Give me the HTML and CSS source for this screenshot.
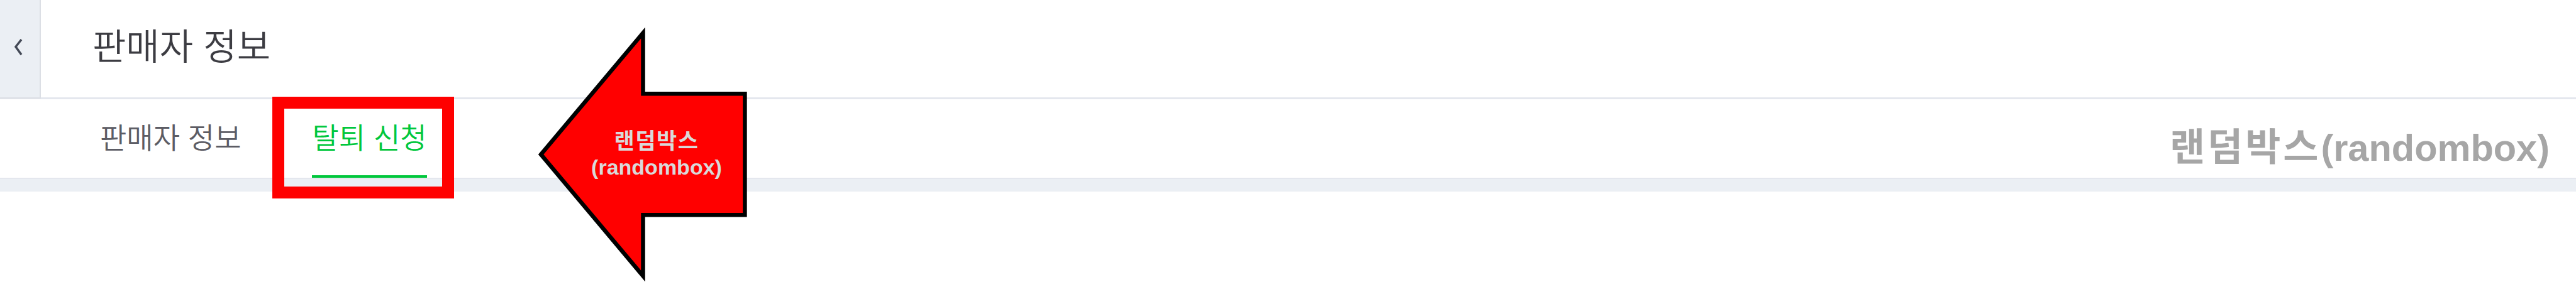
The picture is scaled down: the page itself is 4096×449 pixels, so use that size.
FILE: index.html
```
<!DOCTYPE html>
<html lang="ko">
<head>
    <meta charset="UTF-8">
    <meta name="viewport" content="width=device-width, initial-scale=1.0">
    <title>판매자 정보</title>
    <link rel="stylesheet" href="styles.css">
</head>
<body>
    <div class="page">
        <!-- Header -->
        <header class="header">
            <button class="collapse" type="button">
                <svg class="chevron" viewBox="0 0 14 26">
                    <path d="M12 1 L3 12.5 L12 25" />
                </svg>
            </button>
            <h1 class="title">판매자 정보</h1>
        </header>

        <!-- Tabs -->
        <nav class="tabs">
            <a class="tab">판매자 정보</a>
            <a class="tab active">탈퇴 신청</a>
            <span class="brand"><span class="ko">랜덤박스</span>(randombox)</span>
        </nav>

        <!-- Annotations -->
        <div class="highlight"></div>
        <div class="arrow">
            <svg class="arrow-shape" viewBox="0 0 360 437">
                <path d="M5.5 219 L180 11 V115 H354 V322.5 H180 V427 Z" />
            </svg>
            <div class="arrow-label">
                <span class="ko">랜덤박스</span>
                <span>(randombox)</span>
            </div>
        </div>
    </div>
</body>
</html>
```
FILE: styles.css
```
:root {
    --panel: #ebeff4;
    --line: #e4e7ee;
    --green: #00c73c;
    --red: #ff0000;
}

* {
    margin: 0;
    padding: 0;
    box-sizing: border-box;
}

body {
    font-family: 'Noto Sans CJK KR', sans-serif;
    background-color: #fff;
}

.page {
    position: relative;
    height: 449px;
}

/* Header */
.header {
    display: flex;
    height: 158px;
    border-bottom: 3px solid var(--line);
}

.collapse {
    display: flex;
    align-items: center;
    width: 65px;
    height: 157px;
    padding: 0 0 6px 22px;
    border: 0 solid #dcdfe5;
    border-width: 0 2px 2px 0;
    background-color: var(--panel);
}

.chevron {
    width: 14px;
    height: 26px;
    fill: none;
    stroke: #434956;
    stroke-width: 3.5;
}

.title {
    padding-left: 82px;
    font-size: 58px;
    font-weight: 350;
    line-height: 141px;
    color: #3c3c42;
}

/* Tabs */
.tabs {
    display: flex;
    height: 147px;
    padding: 0 42px 0 159px;
    background: linear-gradient(#fff 125px, var(--line) 125px, var(--line) 127px, var(--panel) 127px);
}

.tab {
    height: 125px;
    margin-right: 113px;
    font-size: 46px;
    font-weight: 350;
    line-height: 117px;
    color: #5c5c64;
}

.tab.active {
    border-bottom: 4px solid var(--green);
    color: var(--green);
}

.brand {
    margin-left: auto;
    font-family: 'Liberation Sans', sans-serif;
    font-size: 59.5px;
    font-weight: bold;
    line-height: 156px;
    color: #a6a6a6;
}

.ko {
    font-family: 'Noto Sans CJK KR', sans-serif;
}

.brand .ko {
    font-size: 61px;
    line-height: 1;
    letter-spacing: 4px;
}

/* Annotations */
.highlight {
    position: absolute;
    left: 433px;
    top: 154px;
    width: 289px;
    height: 162px;
    border: 19.5px solid var(--red);
}

.arrow {
    position: absolute;
    left: 855px;
    top: 42px;
    width: 335px;
    height: 407px;
}

.arrow-shape {
    display: block;
    width: 335px;
    height: 407px;
    fill: var(--red);
    stroke: #000;
    stroke-width: 7;
    stroke-miterlimit: 10;
}

.arrow-label {
    position: absolute;
    left: 84px;
    top: 157px;
    width: 210px;
    display: flex;
    flex-direction: column;
    align-items: center;
    font-family: 'Liberation Sans', sans-serif;
    font-size: 34px;
    font-weight: bold;
    line-height: 45px;
    color: #d9d9d9;
}

.arrow-label .ko {
    font-size: 35px;
    letter-spacing: 1.5px;
}
```
